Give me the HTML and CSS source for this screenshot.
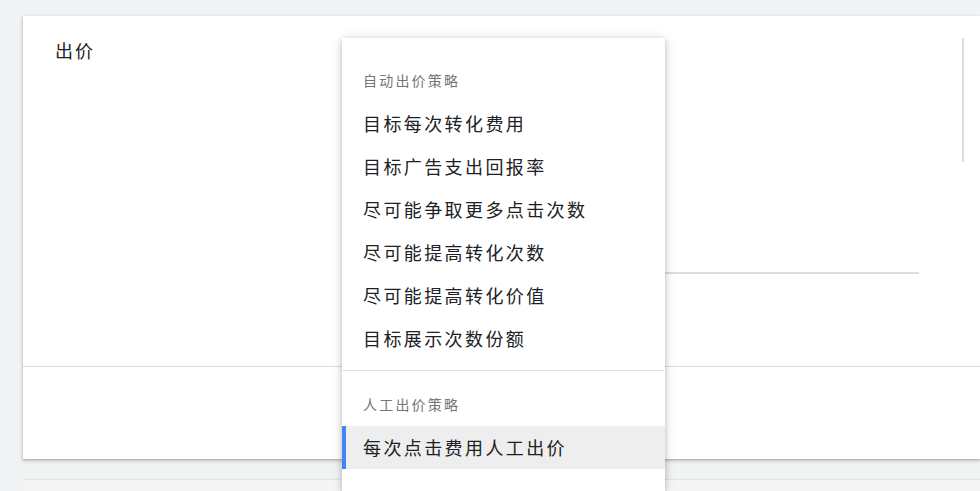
FILE: index.html
```html
<!DOCTYPE html>
<html lang="zh-CN">
<head>
<meta charset="utf-8">
<title>出价</title>
<link rel="stylesheet" href="styles.css">
</head>
<body>
<div class="page">
  <section class="card">
    <div class="card-top">
      <div class="label">出价</div>
      <div class="field"></div>
      <div class="side-bar"></div>
    </div>
    <div class="card-bottom"></div>
  </section>
  <section class="card next-card"></section>
</div>

<div class="menu">
  <div class="menu-header first">自动出价策略</div>
  <ul class="menu-list">
    <li class="menu-item">目标每次转化费用</li>
    <li class="menu-item">目标广告支出回报率</li>
    <li class="menu-item">尽可能争取更多点击次数</li>
    <li class="menu-item">尽可能提高转化次数</li>
    <li class="menu-item">尽可能提高转化价值</li>
    <li class="menu-item">目标展示次数份额</li>
  </ul>
  <div class="menu-divider"></div>
  <div class="menu-header">人工出价策略</div>
  <ul class="menu-list">
    <li class="menu-item selected">每次点击费用人工出价</li>
  </ul>
</div>
</body>
</html>
```

FILE: styles.css
```css
html, body {
  margin: 0;
  padding: 0;
  height: 100%;
  overflow: hidden;
  background: #f1f3f4;
  font-family: "Noto Sans CJK SC", "Noto Sans", Roboto, sans-serif;
  color: #202124;
}

.page {
  padding: 16px 0 0 23px;
}

.card {
  background: #fff;
  width: 957px;
  box-shadow: 0 1px 2px rgba(60, 64, 67, 0.35), 0 2px 4px 1px rgba(60, 64, 67, 0.12);
}

.card-top {
  display: flex;
  align-items: flex-start;
  height: 351px;
  box-sizing: border-box;
  padding: 22px 0 0 32px;
  border-bottom: 1px solid #dcdcdc;
}

.label {
  width: 287px;
  font-size: 18px;
  line-height: 24px;
  letter-spacing: 2px;
  color: #202124;
}

.field {
  width: 577px;
  height: 234px;
  border-bottom: 2px solid #dadce0;
}

.side-bar {
  margin-left: 43px;
  width: 2px;
  height: 124px;
  background: #dadce0;
}

.card-bottom {
  height: 92px;
}

.next-card {
  margin-top: 21px;
  height: 11px;
  background: #f5f5f5;
  box-shadow: 0 -1px 1px rgba(60, 64, 67, 0.08);
}

.menu {
  position: absolute;
  left: 342px;
  top: 38px;
  width: 323px;
  height: 453px;
  background: #fff;
  box-shadow: 0 2px 6px rgba(0, 0, 0, 0.22), 0 1px 12px rgba(0, 0, 0, 0.1);
}

.menu-header {
  padding: 23px 0 0 21px;
  height: 20px;
  font-size: 14px;
  line-height: 20px;
  letter-spacing: 2.2px;
  color: #757575;
}

.menu-header.first {
  margin-top: 9px;
}

.menu-list {
  list-style: none;
  margin: 12px 0 0;
  padding: 0 0 10px;
}

.menu-header.first + .menu-list {
  margin-top: 12px;
}

.menu-header + .menu-list {
  margin-top: 12px;
}

.menu-item {
  height: 43px;
  line-height: 43px;
  padding-left: 21px;
  font-size: 18px;
  letter-spacing: 2.4px;
  color: #202124;
}

.menu-item.selected {
  background: #eeeeee;
  border-left: 4px solid #4285f4;
  padding-left: 17px;
}

.menu-divider {
  height: 1px;
  background: #e0e0e0;
}
```
